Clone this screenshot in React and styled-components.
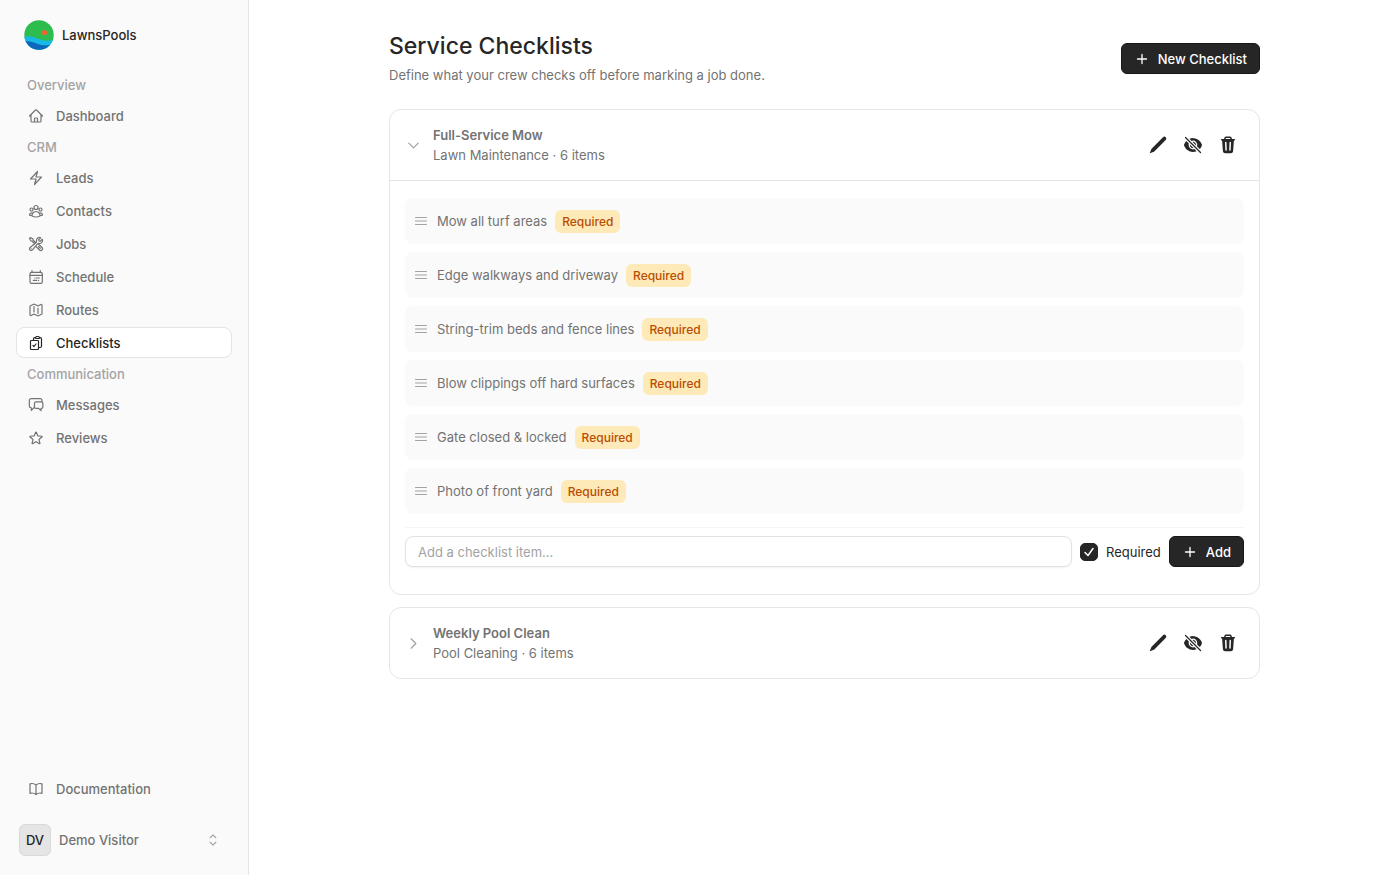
import React from "react";
import styled, { createGlobalStyle, css } from "styled-components";
import {
  HiOutlineHome,
  HiOutlineBolt,
  HiOutlineUserGroup,
  HiOutlineWrenchScrewdriver,
  HiOutlineMap,
  HiOutlineClipboardDocumentCheck,
  HiOutlineStar,
  HiOutlineBookOpen,
  HiChevronUpDown,
  HiOutlineChevronDown,
  HiOutlineChevronRight,
  HiOutlineBars3,
} from "react-icons/hi2";

const GlobalStyle = createGlobalStyle`
  *, *::before, *::after { box-sizing: border-box; }
  body {
    margin: 0;
    background: #fff;
    color: #262626;
    font-family: Inter, "Liberation Sans", sans-serif;
    font-size: 13px;
    line-height: 20px;
  }
  button, input { font: inherit; color: inherit; }
  h1, h2, p, ul { margin: 0; padding: 0; }
  ul { list-style: none; }
`;

const Shell = styled.div`
  display: flex;
  min-height: 100vh;
`;

const Sidebar = styled.aside`
  display: flex;
  flex-direction: column;
  flex: 0 0 249px;
  padding: 20px 16px 16px;
  background: #fafafa;
  border-right: 1px solid #e5e5e5;
`;

const Brand = styled.a`
  display: flex;
  align-items: center;
  gap: 8px;
  padding-left: 8px;
  margin-bottom: 24px;
  height: 30px;
  color: #262626;
  font-weight: 500;
  text-decoration: none;
`;

const Nav = styled.nav`
  display: flex;
  flex-direction: column;
  flex: 1;
`;

const NavHeading = styled.h2`
  padding: 0 11px;
  margin-bottom: 4px;
  font-size: 13px;
  font-weight: 500;
  line-height: 22px;
  color: #a3a3a3;
`;

const NavList = styled.ul`
  display: flex;
  flex-direction: column;
  gap: 2px;
  margin-bottom: 5px;
`;

const NavLink = styled.a`
  display: flex;
  align-items: center;
  gap: 12px;
  height: 31px;
  padding: 0 11px;
  border: 1px solid transparent;
  border-radius: 8px;
  color: #737373;
  font-weight: 500;
  text-decoration: none;
  svg { stroke-width: 1.8; }
  ${(p) =>
    p.$active &&
    css`
      background: #fff;
      border-color: #e5e5e5;
      color: #262626;
    `}
`;

const UserButton = styled.button`
  display: flex;
  align-items: center;
  gap: 8px;
  margin-top: 17px;
  padding: 0 10px 0 3px;
  height: 38px;
  border: 0;
  background: none;
  color: #737373;
  font-weight: 500;
  text-align: left;
  svg { margin-left: auto; color: #a3a3a3; }
`;

const Avatar = styled.span`
  display: grid;
  place-items: center;
  width: 32px;
  height: 32px;
  border: 1px solid #d9d9d9;
  border-radius: 6px;
  background: #e5e5e5;
  color: #262626;
`;

const Main = styled.main`
  flex: 1;
  min-width: 0;
  padding: 32px 24px;
`;

const Content = styled.div`
  display: flex;
  flex-direction: column;
  gap: 12px;
  max-width: 871px;
  margin: 0 auto;
`;

const PageHeader = styled.header`
  display: flex;
  align-items: center;
  justify-content: space-between;
  margin-bottom: 12px;
`;

const Title = styled.h1`
  font-size: 23px;
  font-weight: 500;
  line-height: 29px;
`;

const Subtitle = styled.p`
  margin-top: 4px;
  color: #737373;
`;

const PrimaryButton = styled.button`
  display: flex;
  align-items: center;
  gap: 8px;
  height: 31px;
  padding: 0 12px;
  border: 1px solid #171717;
  border-radius: 6px;
  background: #262626;
  color: #fff;
  font-weight: 500;
`;

const Card = styled.section`
  border: 1px solid #e5e5e5;
  border-radius: 12px;
  background: #fff;
`;

const CardHeader = styled.header`
  display: flex;
  align-items: center;
  gap: 12px;
  height: 70px;
  padding: 0 19px 0 16px;
`;

const Toggle = styled.button`
  display: flex;
  padding: 0;
  border: 0;
  background: none;
  color: #a3a3a3;
  svg { stroke-width: 2; }
`;

const CardText = styled.div`
  flex: 1;
  color: #737373;
`;

const CardTitle = styled.h2`
  font-size: 13px;
  font-weight: 600;
  line-height: 20px;
`;

const Actions = styled.div`
  display: flex;
  gap: 11px;
`;

const IconButton = styled.button`
  display: grid;
  place-items: center;
  width: 24px;
  height: 24px;
  padding: 0;
  border: 0;
  background: none;
`;

const CardBody = styled.div`
  padding: 17px 15px 27px;
  border-top: 1px solid #e5e5e5;
`;

const ItemList = styled.ul`
  display: flex;
  flex-direction: column;
  gap: 8px;
`;

const Item = styled.li`
  display: flex;
  align-items: center;
  gap: 8px;
  min-height: 46px;
  padding: 0 8px;
  border-radius: 8px;
  background: #fafafa;
  color: #737373;
  svg { color: #a3a3a3; }
`;

const Badge = styled.span`
  padding: 0 7px;
  border-radius: 6px;
  background: #fdeab8;
  color: #bb4d00;
  font-size: 12px;
  font-weight: 500;
  line-height: 23px;
`;

const AddForm = styled.form`
  display: flex;
  align-items: center;
  gap: 8px;
  margin-top: 13px;
  padding-top: 8px;
  border-top: 1px solid #f5f5f5;
`;

const TextInput = styled.input`
  flex: 1;
  min-width: 0;
  height: 31px;
  padding: 0 12px;
  border: 1px solid #e2e2e2;
  border-radius: 8px;
  background: #fff;
  box-shadow: 0 1px 2px rgba(0, 0, 0, 0.06);
  &::placeholder { color: #a3a3a3; opacity: 1; }
`;

const CheckLabel = styled.label`
  display: flex;
  align-items: center;
  gap: 8px;
`;

const tick = encodeURIComponent(
  '<svg xmlns="http://www.w3.org/2000/svg" viewBox="0 0 18 18" fill="none" stroke="white" stroke-width="1.5" stroke-linecap="round" stroke-linejoin="round"><path d="M5 9.5 8 12.5 13 5.5"/></svg>'
);

const Checkbox = styled.input`
  appearance: none;
  width: 18px;
  height: 18px;
  margin: 0;
  border-radius: 5px;
  border: 1px solid #262626;
  &:checked {
    background: #262626 url("data:image/svg+xml,${tick}") center / 18px 18px no-repeat;
  }
`;

const Logo = () => (
  <svg width="30" height="30" viewBox="0 0 30 30" aria-hidden="true">
    <defs>
      <clipPath id="logo-disc"><circle cx="15" cy="15" r="14.7" /></clipPath>
    </defs>
    <g clipPath="url(#logo-disc)">
      <rect width="30" height="30" fill="#2dbc4e" />
      <path d="M0 17C5 15.5 9 16.500 14 18.800S24 21.500 30 19.500V30H0Z" fill="#18b9e6" />
      <path d="M0 21.500C6 20.500 10 22.500 14 24S22 26 30 24V30H0Z" fill="#0d68bd" />
      <circle cx="20.500" cy="12.500" r="2.600" fill="#f0652f" />
    </g>
  </svg>
);

const LineIcon = ({ size, children }) => (
  <svg width={size} height={size} viewBox="0 0 24 24" fill="none" stroke="currentColor" strokeLinecap="round" strokeLinejoin="round" aria-hidden="true">
    {children}
  </svg>
);

const CalendarIcon = ({ size }) => (
  <LineIcon size={size}>
    <rect x="3" y="5" width="18.500" height="16.500" rx="2.500" />
    <path d="M3 9.500h18.500M6 2.500V5M18.500 2.500V5M12.500 13.500H17M8 17.200h5M10 13.500h.1M15.800 17.200h.1" />
  </LineIcon>
);

const MessagesIcon = ({ size }) => (
  <LineIcon size={size}>
    <path d="M21 7V5a2.600 2.600 0 0 0-2.600-2.600H4.600A2.600 2.600 0 0 0 2 5v8.500a2.600 2.600 0 0 0 2.600 2.600H5v4l4-4" />
    <path d="M12 7.300h8a2.300 2.300 0 0 1 2.300 2.300v5.300a2.300 2.300 0 0 1-2.300 2.300h-.5v3.300l-3.500-3.300h-4a2.300 2.300 0 0 1-2.300-2.300V9.600A2.300 2.300 0 0 1 12 7.300Z" />
  </LineIcon>
);

const PlusIcon = () => (
  <svg width="16" height="16" viewBox="0 0 16 16" fill="none" stroke="currentColor" strokeWidth="1.3" strokeLinecap="round" aria-hidden="true">
    <path d="M8 3.500v9M3.500 8h9" />
  </svg>
);

const PencilIcon = () => (
  <svg width="20" height="20" viewBox="0 0 20 20" fill="currentColor" aria-hidden="true">
    <path d="M17.700 2.300a1.900 1.900 0 0 0-2.700 0L4.100 13.200a5 5 0 0 0-1.100 1.700L1.800 18l.2.200 3.100-1.200a5 5 0 0 0 1.700-1.100L17.700 5a1.900 1.900 0 0 0 0-2.700Z" />
  </svg>
);

const EyeOffIcon = () => (
  <svg width="20" height="20" viewBox="0 0 24 24" fill="currentColor" aria-hidden="true">
    <path d="M3.530 2.470a.75.75 0 0 0-1.060 1.060l18 18a.75.75 0 1 0 1.060-1.060l-18-18ZM22.676 12.553a11.249 11.249 0 0 1-2.631 4.310l-3.099-3.099a5.250 5.250 0 0 0-6.710-6.710L7.759 4.577a11.217 11.217 0 0 1 4.242-.827c4.970 0 9.185 3.223 10.675 7.690.120.362.120.752 0 1.113Z" />
    <path d="M15.750 12c0 .180-.013.357-.037.530l-4.244-4.243A3.750 3.750 0 0 1 15.750 12ZM12.530 15.713l-4.243-4.244a3.750 3.750 0 0 0 4.244 4.243Z" />
    <path d="M6.750 12c0-.619.107-1.213.304-1.764l-3.100-3.100a11.250 11.250 0 0 0-2.630 4.310c-.120.362-.120.752 0 1.114 1.489 4.467 5.704 7.690 10.675 7.690 1.500 0 2.933-.294 4.242-.827l-2.477-2.477A5.250 5.250 0 0 1 6.750 12Z" />
  </svg>
);

const TrashIcon = () => (
  <svg width="20" height="20" viewBox="0 0 20 20" fill="currentColor" aria-hidden="true">
    <path fillRule="evenodd" d="M6 4 6.400 2.700A1.800 1.800 0 0 1 8.100 1.500h3.800a1.800 1.800 0 0 1 1.700 1.200L14 4h2.300a.75.75 0 0 1 0 1.500h-.4l-.8 10.700a2.300 2.300 0 0 1-2.300 2.100H7.200a2.300 2.300 0 0 1-2.300-2.100L4.100 5.500h-.4a.75.75 0 0 1 0-1.500ZM7.500 4h5l-.3-.8a.5.5 0 0 0-.5-.3H8.300a.5.5 0 0 0-.5.3ZM7 7.500l.3 7.500a.75.75 0 0 0 1.500 0l-.3-7.500a.75.75 0 0 0-1.500 0Zm4.500 0-.3 7.500a.75.75 0 0 0 1.500 0l.3-7.500a.75.75 0 0 0-1.500 0Z" />
  </svg>
);

const groups = [
  { title: "Overview", links: [["Dashboard", HiOutlineHome]] },
  {
    title: "CRM",
    links: [
      ["Leads", HiOutlineBolt],
      ["Contacts", HiOutlineUserGroup],
      ["Jobs", HiOutlineWrenchScrewdriver],
      ["Schedule", CalendarIcon],
      ["Routes", HiOutlineMap],
      ["Checklists", HiOutlineClipboardDocumentCheck],
    ],
  },
  {
    title: "Communication",
    links: [
      ["Messages", MessagesIcon],
      ["Reviews", HiOutlineStar],
    ],
  },
];

const items = [
  "Mow all turf areas",
  "Edge walkways and driveway",
  "String-trim beds and fence lines",
  "Blow clippings off hard surfaces",
  "Gate closed & locked",
  "Photo of front yard",
];

function Checklist({ title, detail, open, children }) {
  const Chevron = open ? HiOutlineChevronDown : HiOutlineChevronRight;
  return (
    <Card>
      <CardHeader>
        <Toggle type="button" aria-expanded={open} aria-label={title}>
          <Chevron size={15} />
        </Toggle>
        <CardText>
          <CardTitle>{title}</CardTitle>
          <p>{detail}</p>
        </CardText>
        <Actions>
          <IconButton type="button" aria-label="Edit"><PencilIcon /></IconButton>
          <IconButton type="button" aria-label="Hide"><EyeOffIcon /></IconButton>
          <IconButton type="button" aria-label="Delete"><TrashIcon /></IconButton>
        </Actions>
      </CardHeader>
      {open && <CardBody>{children}</CardBody>}
    </Card>
  );
}

export default function App() {
  return (
    <>
      <GlobalStyle />
      <Shell>
        <Sidebar>
          <Brand href="#"><Logo />LawnsPools</Brand>
          <Nav>
            {groups.map((group) => (
              <React.Fragment key={group.title}>
                <NavHeading>{group.title}</NavHeading>
                <NavList>
                  {group.links.map(([label, Icon]) => (
                    <li key={label}>
                      <NavLink href="#" $active={label === "Checklists"}>
                        <Icon size={16} />
                        {label}
                      </NavLink>
                    </li>
                  ))}
                </NavList>
              </React.Fragment>
            ))}
          </Nav>
          <NavLink href="#"><HiOutlineBookOpen size={16} />Documentation</NavLink>
          <UserButton type="button">
            <Avatar>DV</Avatar>
            Demo Visitor
            <HiChevronUpDown size={18} />
          </UserButton>
        </Sidebar>
        <Main>
          <Content>
            <PageHeader>
              <div>
                <Title>Service Checklists</Title>
                <Subtitle>Define what your crew checks off before marking a job done.</Subtitle>
              </div>
              <PrimaryButton type="button"><PlusIcon />New Checklist</PrimaryButton>
            </PageHeader>
            <Checklist title="Full-Service Mow" detail="Lawn Maintenance · 6 items" open>
              <ItemList>
                {items.map((item) => (
                  <Item key={item}>
                    <HiOutlineBars3 size={16} />
                    {item}
                    <Badge>Required</Badge>
                  </Item>
                ))}
              </ItemList>
              <AddForm>
                <TextInput type="text" placeholder="Add a checklist item..." aria-label="Checklist item" />
                <CheckLabel>
                  <Checkbox type="checkbox" defaultChecked />
                  Required
                </CheckLabel>
                <PrimaryButton type="button"><PlusIcon />Add</PrimaryButton>
              </AddForm>
            </Checklist>
            <Checklist title="Weekly Pool Clean" detail="Pool Cleaning · 6 items" open={false} />
          </Content>
        </Main>
      </Shell>
    </>
  );
}
